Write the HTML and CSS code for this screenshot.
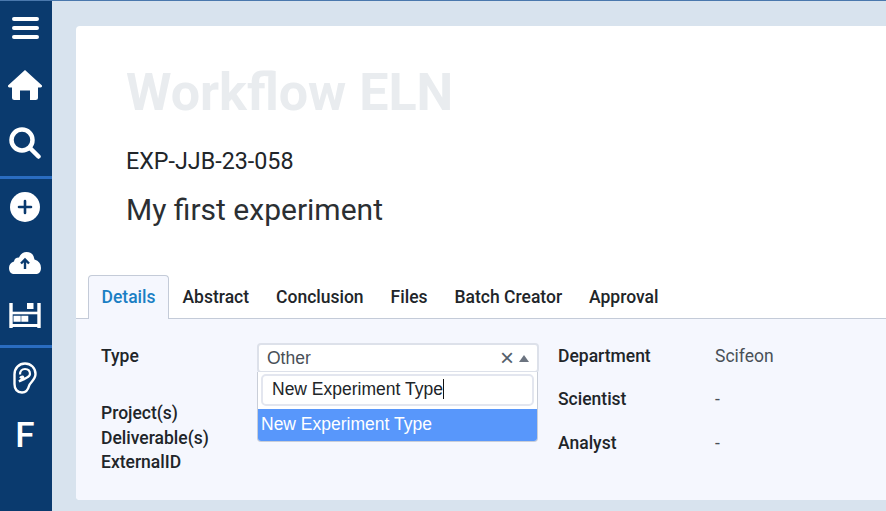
FILE: index.html
```html
<!DOCTYPE html>
<html lang="en">
<head>
  <meta charset="UTF-8" />
  <title>Workflow ELN</title>
  <link rel="stylesheet" href="styles.css">
</head>
<body>
  <!-- Sidebar -->
  <nav class="sidebar">
    <div class="nav-item nav-menu">
      <svg width="27" height="24" viewBox="0 0 27 24"><path d="M2 3h23M2 12h23M2 21h23" stroke="#fff" stroke-width="4" stroke-linecap="round"/></svg>
    </div>
    <div class="nav-item nav-home">
      <svg width="36" height="32" viewBox="0 0 36 32"><path fill="#fff" d="M18 1 35 16.500Q35.500 18.500 33.500 18.500H31V28.500Q31 31 28.500 31H23V21.500H13V31H7.500Q5 31 5 28.500V18.500H2.500Q.5 18.500 1 16.500Z"/></svg>
    </div>
    <div class="nav-item nav-search">
      <svg width="32" height="32" viewBox="0 0 32 32"><circle cx="13" cy="13" r="10.500" fill="none" stroke="#fff" stroke-width="4.500"/><path d="M21 21 29.500 29.500" stroke="#fff" stroke-width="4.500" stroke-linecap="round"/></svg>
    </div>
    <div class="nav-divider"></div>
    <div class="nav-item nav-add">
      <svg width="30" height="30" viewBox="0 0 30 30"><circle cx="15" cy="15" r="15" fill="#fff"/><path d="M15 9v12M9 15h12" stroke="#0a3a6e" stroke-width="2.600" stroke-linecap="round"/></svg>
    </div>
    <div class="nav-item nav-cloud">
      <svg width="32" height="24" viewBox="0 0 32 24"><path fill="#fff" d="M4 23Q0 22 0 17 0 12 5 10.500 5.500 6.500 10 6.500 12.500 1 17.500 1 24.500 1 25.500 8.500 32 10.500 32 17 32 22 28 23Z"/><path d="M16 18V9M12 12.500 16 8.500 20 12.500" fill="none" stroke="#0a3a6e" stroke-width="2.400"/></svg>
    </div>
    <div class="nav-item nav-shelf">
      <svg width="32" height="26" viewBox="0 0 32 26"><path d="M2 0v25M30 0v25" stroke="#fff" stroke-width="3.400"/><path d="M2 10h28" stroke="#fff" stroke-width="2.600"/><path d="M1 22.500h30" stroke="#fff" stroke-width="3"/><path fill="#fff" d="M18 0h6.500v6H18zM4.500 12.700h7.200v6H4.500zM12.300 12.700h7v6h-7z"/></svg>
    </div>
    <div class="nav-divider nav-divider-low"></div>
    <div class="nav-item nav-ear">
      <svg width="24" height="32" viewBox="0 0 24 32"><path d="M1.500 12.500C1.500 6 6 1.500 12 1.500S22.500 6 22.500 12C22.500 18 17 20 16 24 15 28 13 30.500 9 30.500 4 30.500 1.500 27 1.500 22Z" fill="none" stroke="#fff" stroke-width="2.400"/><path d="M7 12.500C7 9 9 7 12 7S17 9 17 12C17 15 13 15.500 11.500 17L6 19.500 10 16.500C11 14 8.500 14 7 16" fill="none" stroke="#fff" stroke-width="2.200"/></svg>
    </div>
    <div class="nav-item nav-letter">F</div>
  </nav>

  <main class="page">
    <section class="card">
      <header class="card-head">
        <h1>Workflow ELN</h1>
        <div class="exp-code">EXP-JJB-23-058</div>
        <div class="exp-title">My first experiment</div>
      </header>

      <ul class="tabs">
        <li class="tab active">Details</li>
        <li class="tab">Abstract</li>
        <li class="tab">Conclusion</li>
        <li class="tab">Files</li>
        <li class="tab">Batch Creator</li>
        <li class="tab">Approval</li>
      </ul>

      <div class="tab-body">
        <div class="col-left">
          <div class="type-row">
            <span class="label">Type</span>
            <div class="select">
              <div class="select-box">
                <span class="select-value">Other</span>
                <span class="select-clear">×</span>
                <span class="select-arrow"></span>
              </div>
              <div class="select-drop">
                <div class="select-search"><span class="caret">New Experiment Type</span></div>
                <div class="select-option">New Experiment Type</div>
              </div>
            </div>
          </div>
          <div class="label-stack">
            <span class="label">Project(s)</span>
            <span class="label">Deliverable(s)</span>
            <span class="label">ExternalID</span>
          </div>
        </div>
        <div class="col-right">
          <span class="label">Department</span><span class="value">Scifeon</span>
          <span class="label">Scientist</span><span class="value">-</span>
          <span class="label">Analyst</span><span class="value">-</span>
        </div>
      </div>
    </section>
  </main>
</body>
</html>
```

FILE: styles.css
```css
html, body {
  height: 100%;
}

body {
  margin: 0;
  display: flex;
  overflow: hidden;
  background: #d8e3ee;
  border-top: 1px solid #4a78ad;
  box-sizing: border-box;
  font-family: Roboto, sans-serif;
  color: #212529;
}

/* Sidebar */
.sidebar {
  width: 52px;
  box-sizing: border-box;
  padding-right: 2px;
  flex-shrink: 0;
  background: #0a3a6e;
  display: flex;
  flex-direction: column;
  align-items: center;
}

.nav-item {
  display: flex;
  justify-content: center;
  align-items: center;
}

.nav-menu { margin-top: 15px; }
.nav-home { margin-top: 29px; }
.nav-search { margin-top: 26px; }
.nav-add { margin-top: 13px; }
.nav-cloud { margin-top: 29px; }
.nav-shelf { margin-top: 28px; }
.nav-ear { margin-top: 14px; }

.nav-letter {
  margin-top: 21px;
  color: #fff;
  font-size: 35px;
  font-weight: 500;
  line-height: 41px;
}

.nav-divider {
  align-self: stretch;
  margin-right: -2px;
  height: 3px;
  margin-top: 17px;
  background: #2a6cc0;
}

.nav-divider-low {
  margin-top: 16px;
}

/* Card */
.page {
  flex: 1;
  min-width: 0;
  padding: 25px 0 10px 24px;
}

.card {
  height: 474px;
  background: #fff;
  border-radius: 4px 0 0 4px;
  display: flex;
  flex-direction: column;
  overflow: hidden;
}

.card-head {
  padding: 34px 50px 0;
  height: 216px;
  box-sizing: border-box;
}

h1 {
  margin: 0;
  font-size: 52px;
  line-height: 66px;
  font-weight: 700;
  color: #e9ecef;
}

.exp-code {
  margin-top: 21px;
  font-size: 23.300px;
  line-height: 28px;
}

.exp-title {
  margin-top: 17px;
  font-size: 30px;
  line-height: 36px;
  color: #2b2f33;
}

/* Tabs */
.tabs {
  list-style: none;
  margin: 33px 0 0;
  padding: 0 12px;
  display: flex;
  border-bottom: 1px solid #c4cbd8;
  height: 43px;
}

.tab {
  padding: 0 12.500px;
  height: 43px;
  line-height: 43px;
  font-size: 17.500px;
  font-weight: 500;
  box-sizing: border-box;
  border: 1px solid transparent;
  border-bottom: 0;
}

.tab.active {
  color: #1a7fc4;
  background: #f5f7fe;
  border-color: #c4cbd8;
  border-radius: 4px 4px 0 0;
  height: 44px;
}

.tab-body {
  flex: 1;
  background: #f5f7fe;
  padding: 24px 25px 0;
  display: flex;
  gap: 19px;
}

.label {
  font-size: 17.500px;
  font-weight: 500;
  line-height: 24px;
}

.col-left {
  width: 438px;
  flex-shrink: 0;
}

.type-row {
  display: flex;
}

.type-row .label {
  width: 156px;
  flex-shrink: 0;
  margin-top: 1px;
}

.label-stack {
  margin-top: 28px;
  display: flex;
  flex-direction: column;
  gap: 0.500px;
}

.col-right {
  display: grid;
  grid-template-columns: 157px auto;
  grid-auto-rows: 43.400px;
  align-items: start;
  padding-top: 1px;
}

.value {
  font-size: 17.500px;
  line-height: 24px;
  color: #495057;
}

/* Select */
.select {
  position: relative;
  width: 282px;
  height: 30px;
}

.select-box {
  height: 30px;
  box-sizing: border-box;
  padding: 0 8px;
  display: flex;
  align-items: center;
  background: #fff;
  border: 2px solid #dde1ea;
  border-radius: 4px;
  font-family: "Liberation Sans", sans-serif;
  font-size: 17.500px;
  color: #495057;
}

.select-value {
  flex: 1;
}

.select-clear {
  font-size: 24px;
  line-height: 24px;
  color: #555e6b;
  margin-right: 5px;
}

.select-arrow {
  width: 0;
  height: 0;
  border: 5.500px solid transparent;
  border-top: 0;
  border-bottom: 7px solid #6c7480;
}

.select-drop {
  position: absolute;
  top: 29px;
  left: 0;
  width: 281px;
  box-sizing: border-box;
  background: #fff;
  border: 1px solid #c9ced8;
  border-top: 0;
  border-radius: 0 0 4px 4px;
  font-family: "Liberation Sans", sans-serif;
  font-size: 17.500px;
}

.select-search {
  margin: 2px 3px 3px;
  height: 32px;
  box-sizing: border-box;
  padding: 0 9px;
  line-height: 27px;
  border: 2px solid #e3e6ef;
  border-radius: 5px;
  color: #212529;
}

.caret {
  border-right: 1px solid #111;
}

.select-option {
  height: 32px;
  line-height: 30px;
  padding: 0 3px;
  background: #5897fb;
  color: #fff;
  border-radius: 0 0 3px 3px;
}
```
